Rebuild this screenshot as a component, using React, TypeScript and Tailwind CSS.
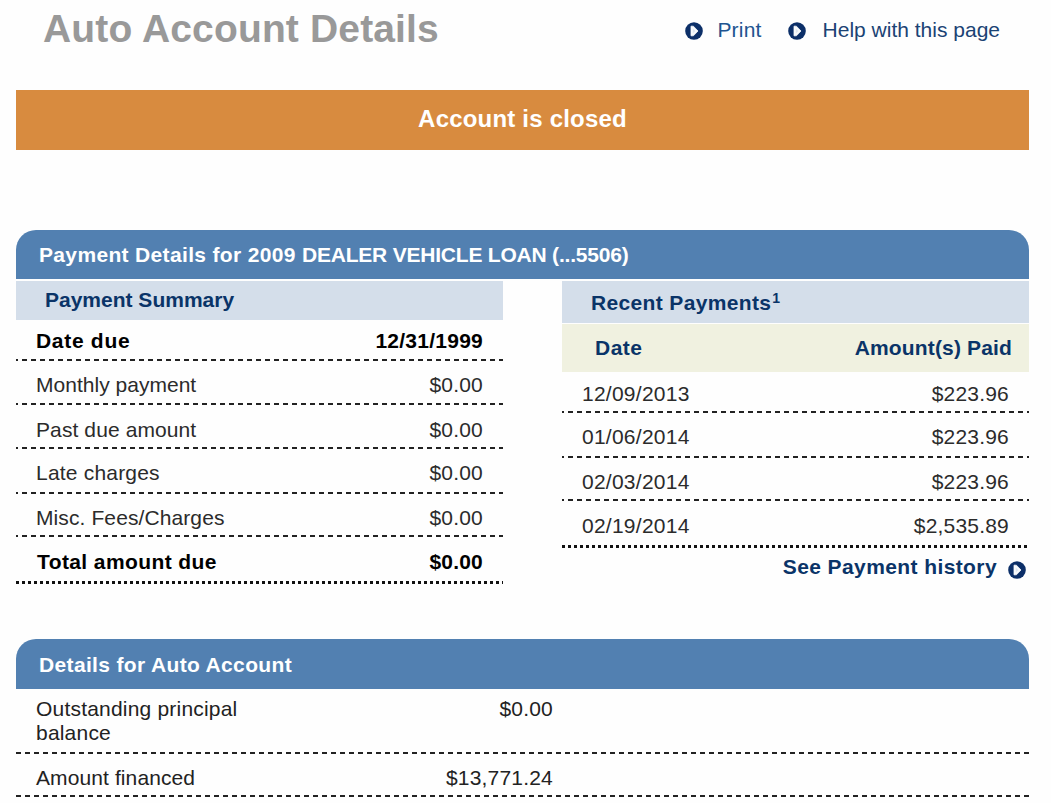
import React from "react";

const dash =
  "bg-[repeating-linear-gradient(to_right,#222_0_5px,transparent_5px_9px)]";
const dots =
  "bg-[repeating-linear-gradient(to_right,#111_0_3px,transparent_3px_6px)]";

function Arrow() {
  return (
    <svg width="18" height="18" viewBox="0 0 18 18" className="block shrink-0">
      <circle cx="9" cy="9" r="8.8" fill="#0c2f68" />
      <path d="M6 4.2 L8.4 4.2 L13 9 L8.4 13.8 L6 13.8 Z" fill="#f8fafc" stroke="#f8fafc" strokeWidth="0.8" strokeLinejoin="round" />
      <path d="M7.8 6.6 L10.4 9 L7.8 11.4 Z" fill="#dfe6f0" />
    </svg>
  );
}

type Line = { label: string; value: string; box: string; left: string; right?: string; bold?: boolean };

const summary: Line[] = [
  { label: "Date due", value: "12/31/1999", box: "h-[41px] pt-[9px]", left: "tracking-[0.7px]", right: "tracking-[0.25px]", bold: true },
  { label: "Monthly payment", value: "$0.00", box: "h-[44px] pt-[12px]", left: "tracking-[0.02px]" },
  { label: "Past due amount", value: "$0.00", box: "h-[44px] pt-[13px]", left: "tracking-[0.1px]" },
  { label: "Late charges", value: "$0.00", box: "h-[45px] pt-[12px]", left: "tracking-[0.2px]" },
  { label: "Misc. Fees/Charges", value: "$0.00", box: "h-[43px] pt-[12px]", left: "tracking-[0.1px]" },
  { label: "Total amount due", value: "$0.00", box: "h-[47px] pt-[13px]", left: "tracking-[0.4px] pl-px", bold: true },
];

const payments: Line[] = [
  { label: "12/09/2013", value: "$223.96", box: "h-[41px] pt-[10px]", left: "tracking-[0.25px]" },
  { label: "01/06/2014", value: "$223.96", box: "h-[45px] pt-[12px]", left: "tracking-[0.25px]" },
  { label: "02/03/2014", value: "$223.96", box: "h-[43px] pt-[12px]", left: "tracking-[0.25px]" },
  { label: "02/19/2014", value: "$2,535.89", box: "h-[47px] pt-[13px]", left: "tracking-[0.25px]" },
];

function Rows({ lines }: { lines: Line[] }) {
  return (
    <div>
      {lines.map((l, i) => (
        <div key={l.label} className={`flex flex-col justify-between ${l.box}`}>
          <div
            className={`flex justify-between pr-5 pl-5 ${l.bold ? "font-bold text-black" : "text-[#2b2b2b]"}`}
          >
            <span className={l.left}>{l.label}</span>
            <span className={l.right ?? "tracking-[0.2px]"}>{l.value}</span>
          </div>
          {i === lines.length - 1 ? (
            <div className={`h-[3px] ${dots}`} />
          ) : (
            <div className="overflow-hidden">
              <div className={`-ml-[3px] h-[2px] ${dash}`} />
            </div>
          )}
        </div>
      ))}
    </div>
  );
}

function Bar({ children, className }: { children: React.ReactNode; className: string }) {
  return (
    <h2 className={`rounded-t-[20px] bg-[#5280b1] pl-[23px] font-bold text-white ${className}`}>
      {children}
    </h2>
  );
}

export default function App() {
  return (
    <div className="h-[803px] overflow-hidden bg-[#fefefe] pr-[22px] pl-4 font-['Liberation_Sans',Arial,sans-serif] text-[21px] leading-6 whitespace-nowrap">
      <header className="flex h-[90px] items-start justify-between pr-[29px] pl-[27px]">
        <h1 className="pt-[7px] text-[39px] leading-[44px] font-bold tracking-[0.15px] text-[#999]">
          Auto Account Details
        </h1>
        <nav className="flex pt-[18px]">
          <a className="flex text-[#205490]">
            <span className="pt-1"><Arrow /></span>
            <span className="ml-[14px] tracking-[0.2px]">Print</span>
          </a>
          <a className="ml-[26px] flex text-[#1b4374]">
            <span className="pt-1"><Arrow /></span>
            <span className="ml-[17px]">Help with this page</span>
          </a>
        </nav>
      </header>

      <div className="h-[60px] bg-[#d88b3f] pt-4 text-center text-[24px] leading-[26px] font-bold tracking-[0.2px] text-white">
        Account is closed
      </div>

      <section className="mt-20">
        <Bar className="h-[49px] pt-[13px]">
          <span className="tracking-[0.34px]">Payment Details for 2009 </span>
          <span className="tracking-[-0.21px]">DEALER VEHICLE LOAN (...5506)</span>
        </Bar>
        <div className="flex justify-between pt-[2px]">
          <div className="w-[487px]">
            <h3 className="h-[39px] bg-[#d4deea] pt-[7px] pl-[29px] font-bold text-[#0a3468]">
              Payment Summary
            </h3>
            <Rows lines={summary} />
          </div>
          <div className="w-[467px]">
            <h3 className="flex h-[42px] bg-[#d4deea] pt-[10px] pl-[29px] font-bold tracking-[0.35px] text-[#0a3468]">
              Recent Payments<span className="-mt-[5px] ml-px text-[14px]">1</span>
            </h3>
            <div className="mt-px flex h-[48px] justify-between bg-[#f0f1e0] pt-3 pr-[17px] pl-[33px] font-bold text-[#0a3468]">
              <span className="tracking-[0.5px]">Date</span>
              <span className="tracking-[0.15px]">Amount(s) Paid</span>
            </div>
            <Rows lines={payments} />
            <a className="flex justify-end pt-[7px] pr-[3px] font-bold text-[#0a3468]">
              <span className="tracking-[0.4px]">See Payment history</span>
              <span className="ml-[11px] pt-[6px]"><Arrow /></span>
            </a>
          </div>
        </div>
      </section>

      <section className="mt-[55px]">
        <Bar className="h-[50px] pt-[14px] tracking-[0.35px]">Details for Auto Account</Bar>
        <div className="flex h-[65px] flex-col justify-between pt-2 text-[#222]">
          <div className="flex w-[537px] justify-between pl-5">
            <span className="tracking-[0.2px]">
              Outstanding principal
              <br />
              balance
            </span>
            <span className="tracking-[0.2px]">$0.00</span>
          </div>
          <div className={`h-[2px] ${dash}`} />
        </div>
        <div className="flex h-[43px] flex-col justify-between pt-3 text-[#222]">
          <div className="flex w-[537px] justify-between pl-5">
            <span className="tracking-[0.1px]">Amount financed</span>
            <span className="tracking-[0.2px]">$13,771.24</span>
          </div>
          <div className={`h-[2px] ${dash}`} />
        </div>
      </section>
    </div>
  );
}
